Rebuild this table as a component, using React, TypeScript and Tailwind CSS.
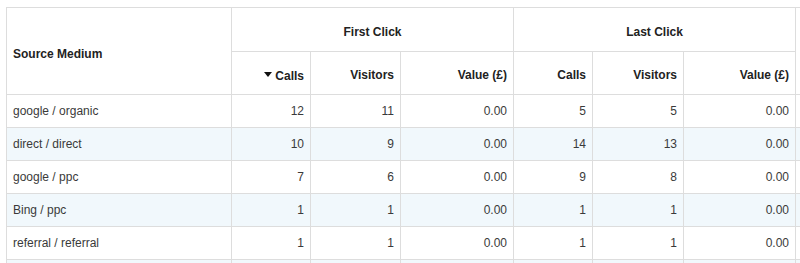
import React from "react";

interface Row {
  source: string;
  first: [number, number, string];
  last: [number, number, string];
}

const rows: Row[] = [
  { source: "google / organic", first: [12, 11, "0.00"], last: [5, 5, "0.00"] },
  { source: "direct / direct", first: [10, 9, "0.00"], last: [14, 13, "0.00"] },
  { source: "google / ppc", first: [7, 6, "0.00"], last: [9, 8, "0.00"] },
  { source: "Bing / ppc", first: [1, 1, "0.00"], last: [1, 1, "0.00"] },
  { source: "referral / referral", first: [1, 1, "0.00"], last: [1, 1, "0.00"] },
  { source: "", first: [0, 0, ""], last: [0, 0, ""] },
];

const th = "border border-[#dddddd] font-bold text-[#222222] px-[6px]";
const cell = "border border-[#dddddd] px-[6px] h-[33px]";
const num = `${cell} text-right`;

const App: React.FC = () => {
  return (
    <div
      className="w-[800px] h-[263px] overflow-hidden bg-white pl-[6px] pt-[7px]"
      style={{ fontFamily: '"Liberation Sans", Arial, sans-serif' }}
    >
      <table className="border-collapse table-fixed w-[840px] text-[12px]">
        <colgroup>
          <col className="w-[225px]" />
          <col className="w-[79px]" />
          <col className="w-[90px]" />
          <col className="w-[113px]" />
          <col className="w-[79px]" />
          <col className="w-[91px]" />
          <col className="w-[112px]" />
          <col className="w-[51px]" />
        </colgroup>
        <thead>
          <tr className="h-[44px]">
            <th rowSpan={2} className={`${th} text-left align-middle pt-[6px]`}>
              Source Medium
            </th>
            <th colSpan={3} className={`${th} text-center pt-[4px]`}>
              First Click
            </th>
            <th colSpan={3} className={`${th} text-center pt-[4px]`}>
              Last Click
            </th>
            <th rowSpan={2} className={th}></th>
          </tr>
          <tr className="h-[43px]">
            <th className={`${th} text-right pt-[3px]`}>
              <span className="inline-flex items-center gap-[3px]">
                <svg width="8" height="5" viewBox="0 0 8 5" className="mb-[3px]">
                  <path d="M0 0 L8 0 L4 5 Z" fill="#111" />
                </svg>
                Calls
              </span>
            </th>
            <th className={`${th} text-right pt-[3px]`}>Visitors</th>
            <th className={`${th} text-right pt-[3px]`}>Value (£)</th>
            <th className={`${th} text-right pt-[3px]`}>Calls</th>
            <th className={`${th} text-right pt-[3px]`}>Visitors</th>
            <th className={`${th} text-right pt-[3px]`}>Value (£)</th>
          </tr>
        </thead>
        <tbody className="text-[#3a3a3a]">
          {rows.map((r, i) => (
            <tr key={i} className={i % 2 === 1 ? "bg-[#f1f8fc]" : "bg-white"}>
              <td className={`${cell} text-left`}>{r.source}</td>
              <td className={num}>{r.source && r.first[0]}</td>
              <td className={num}>{r.source && r.first[1]}</td>
              <td className={num}>{r.first[2]}</td>
              <td className={num}>{r.source && r.last[0]}</td>
              <td className={num}>{r.source && r.last[1]}</td>
              <td className={num}>{r.last[2]}</td>
              <td className={num}></td>
            </tr>
          ))}
        </tbody>
      </table>
    </div>
  );
};

export default App;
